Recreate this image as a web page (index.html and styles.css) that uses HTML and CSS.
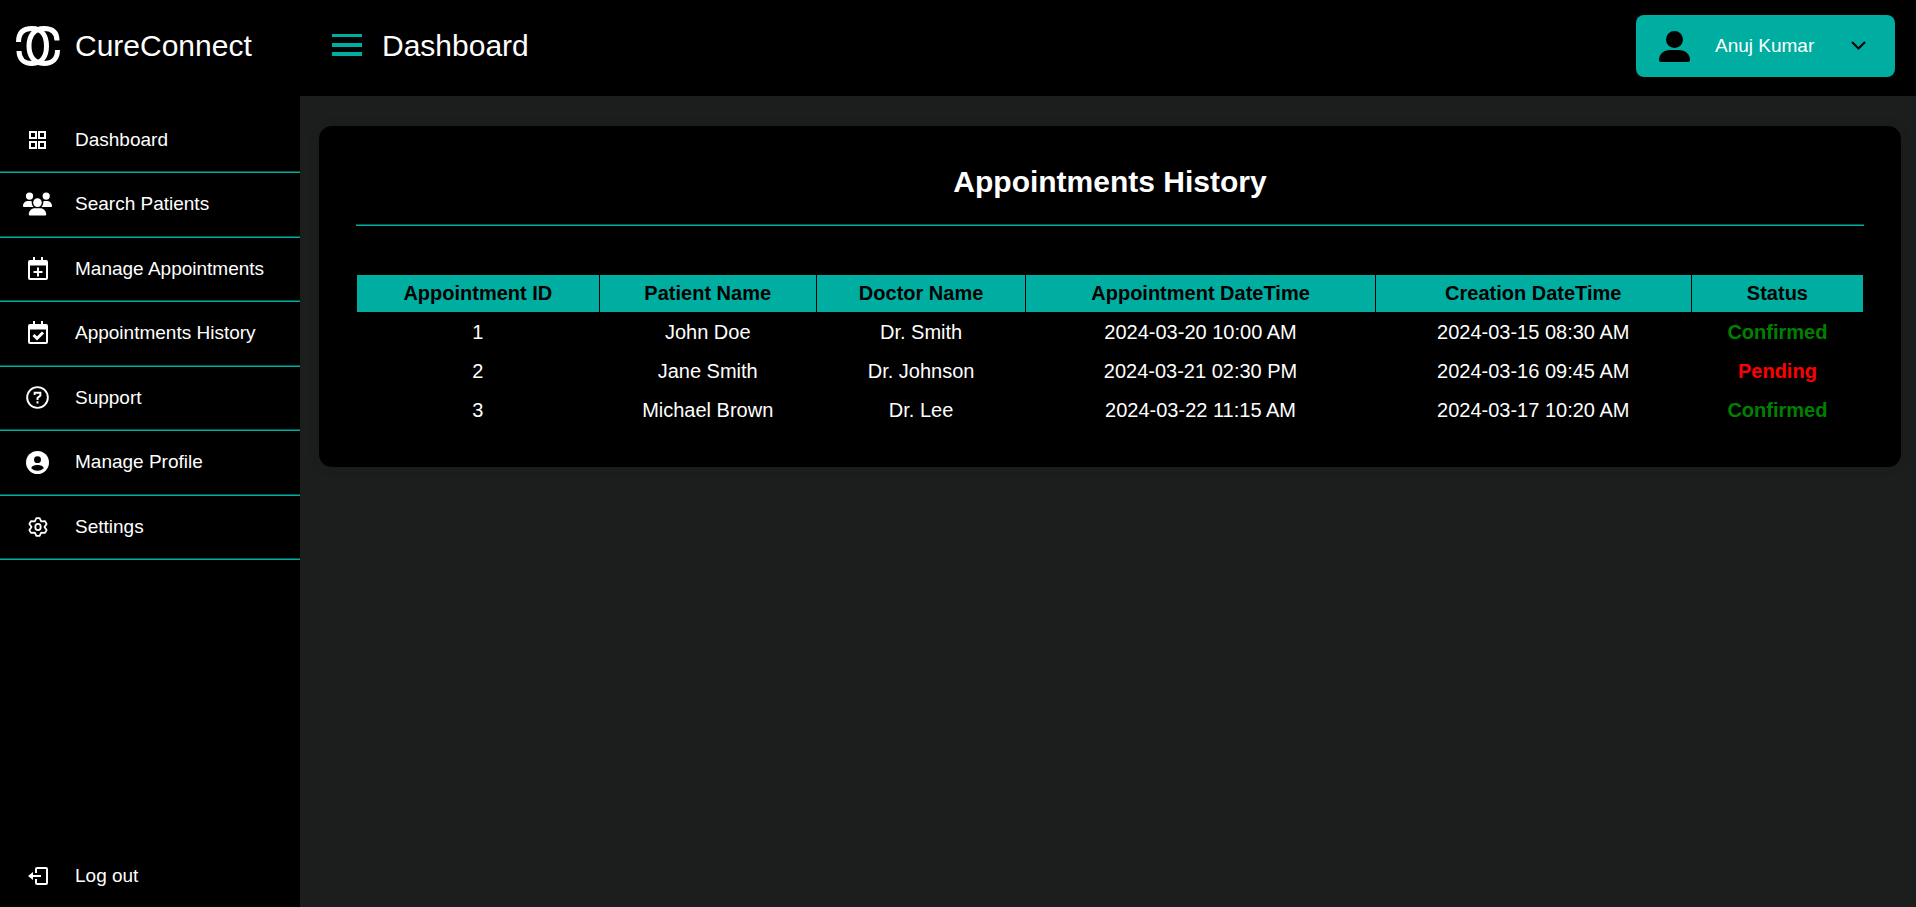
FILE: index.html
```html
<!DOCTYPE html>
<html lang="en">
<head>
<meta charset="utf-8">
<title>CureConnect</title>
<link rel="stylesheet" href="styles.css">
</head>
<body>
<div class="app">
  <aside class="sidebar">
    <div class="brand">
      <svg class="brand-logo" viewBox="0 0 44 40" aria-hidden="true">
        <g fill="none" stroke="#fff" stroke-width="5">
          <path d="M2.500 16C2.500 6 8 2.500 16 2.500C26 2.500 30.500 10 30.500 20S26 37.500 16 37.500C8 37.500 3 33 3 25"/>
          <path d="M41 14.500C41 6 36 2.500 28 2.500C18 2.500 13 10 13 20S18 37.500 28 37.500C36 37.500 41.500 33 41.500 24"/>
        </g>
      </svg>
      <span>CureConnect</span>
    </div>
    <nav class="menu">
      <a class="item" href="#"><span class="icon"><svg width="17" height="18" viewBox="0 0 17 18" fill="none" stroke="#fff" stroke-width="2"><path d="M1 1h6v6H1zM10 1h6v6h-6zM1 11h6v6H1zM10 11h6v6h-6z"/></svg></span>Dashboard</a>
      <a class="item" href="#"><span class="icon"><svg width="29" height="24" viewBox="0 0 640 512" fill="#fff"><path d="M144 0a80 80 0 1 1 0 160A80 80 0 1 1 144 0zM512 0a80 80 0 1 1 0 160A80 80 0 1 1 512 0zM0 298.700C0 239.800 47.800 192 106.700 192h42.700c15.900 0 31 3.500 44.600 9.700c-1.300 7.200-1.900 14.700-1.900 22.300c0 38.200 16.800 72.500 43.300 96H21.300C9.600 320 0 310.400 0 298.700zM405.300 320h-.7c26.600-23.500 43.300-57.800 43.300-96c0-7.600-.7-15-1.900-22.300c13.600-6.300 28.700-9.700 44.600-9.700h42.700C592.200 192 640 239.800 640 298.700c0 11.800-9.600 21.300-21.300 21.300H405.300zM224 224a96 96 0 1 1 192 0a96 96 0 1 1-192 0zM128 485.300C128 411.700 187.700 352 261.300 352h117.400C452.300 352 512 411.700 512 485.300c0 14.700-11.900 26.700-26.700 26.700H154.700c-14.700 0-26.700-11.900-26.700-26.700z"/></svg></span>Search Patients</a>
      <a class="item" href="#"><span class="icon"><svg width="20" height="24" viewBox="0 0 20 24" fill="none" stroke="#fff" stroke-width="2"><path d="M6 0v5M14 0v5M10 10.500v9M5.500 15h9"/><rect x="1" y="4" width="18" height="18" rx="1"/><path d="M1 6h18" stroke-width="5"/></svg></span>Manage Appointments</a>
      <a class="item" href="#"><span class="icon"><svg width="20" height="24" viewBox="0 0 20 24" fill="none" stroke="#fff" stroke-width="2"><path d="M6 0v5M14 0v5"/><path d="M5.500 14l3.500 3.500l6-6" stroke-width="3"/><rect x="1" y="4" width="18" height="18" rx="1"/><path d="M1 6h18" stroke-width="5"/></svg></span>Appointments History</a>
      <a class="item" href="#"><span class="icon"><svg width="23" height="23" viewBox="0 0 24 24" fill="none" stroke="#fff" stroke-width="2"><circle cx="12" cy="12" r="10.800"/><path d="M9 9.500V7h6v3l-3 2.500V14.500M12 15.800v2.400"/></svg></span>Support</a>
      <a class="item" href="#"><span class="icon"><svg width="23" height="23" viewBox="0 0 24 24"><circle cx="12" cy="12" r="12" fill="#fff"/><circle cx="12" cy="9" r="3.600"/><path d="M5.500 18C6 13.500 18 13.500 18.500 18C15 21.500 9 21.500 5.500 18z"/></svg></span>Manage Profile</a>
      <a class="item" href="#"><span class="icon"><svg width="20" height="20" viewBox="0 0 20 20" fill="none" stroke="#fff" stroke-width="1.800" stroke-linejoin="round"><path d="M8.400 1.200h3.200l1.600 3.200l3.800-.3l1.600 2.800L16.500 10l2.100 3.100l-1.600 2.800l-3.800-.3l-1.600 3.200H8.400l-1.600-3.200l-3.800 .3l-1.600-2.800L3.500 10L1.400 6.900L3 4.100l3.800 .3z"/><ellipse cx="10" cy="10" rx="2.700" ry="3.200"/></svg></span>Settings</a>
    </nav>
    <a class="item logout" href="#"><span class="icon"><svg width="20" height="18" viewBox="0 0 20 18" fill="none" stroke="#fff" stroke-width="2"><path d="M8 6V2q0-1 1-1h9q1 0 1 1v14q0 1-1 1H9q-1 0-1-1v-4M3 9h10"/><path d="M5 5v8L0 9z" fill="#fff" stroke="none"/></svg></span>Log out</a>
  </aside>
  <div class="content">
    <header class="topbar">
      <button class="toggle" type="button" aria-label="Toggle menu"><svg width="30" height="22" viewBox="0 0 30 22" fill="#00ada1"><path d="M0 0h30v3H0zM0 9h30v4H0zM0 18h30v4H0z"/></svg></button>
      <span class="page-name">Dashboard</span>
      <button class="account" type="button">
        <svg width="31" height="31" viewBox="0 0 31 31"><circle cx="15.500" cy="8.500" r="8.500"/><path d="M0 29C0 23 5 19 11 19h9c6 0 11 4 11 10q0 2-2 2H2q-2 0-2-2z"/></svg>
        <span class="account-name">Anuj Kumar</span>
        <svg width="15" height="10" viewBox="0 0 15 10" fill="none" stroke="#000" stroke-width="2"><path d="M1 1l6.500 6.500L14 1"/></svg>
      </button>
    </header>
    <main class="main">
      <section class="card">
        <h1 class="title">Appointments History</h1>
        <table class="history">
          <colgroup><col class="col-id"><col class="col-patient"><col class="col-doctor"><col class="col-appointment"><col class="col-creation"><col></colgroup>
          <thead><tr><th>Appointment ID</th><th>Patient Name</th><th>Doctor Name</th><th>Appointment DateTime</th><th>Creation DateTime</th><th>Status</th></tr></thead>
          <tbody>
            <tr><td>1</td><td>John Doe</td><td>Dr. Smith</td><td>2024-03-20 10:00 AM</td><td>2024-03-15 08:30 AM</td><td class="confirmed">Confirmed</td></tr>
            <tr><td>2</td><td>Jane Smith</td><td>Dr. Johnson</td><td>2024-03-21 02:30 PM</td><td>2024-03-16 09:45 AM</td><td class="pending">Pending</td></tr>
            <tr><td>3</td><td>Michael Brown</td><td>Dr. Lee</td><td>2024-03-22 11:15 AM</td><td>2024-03-17 10:20 AM</td><td class="confirmed">Confirmed</td></tr>
          </tbody>
        </table>
      </section>
    </main>
  </div>
</div>
</body>
</html>
```
FILE: styles.css
```css
* { box-sizing: border-box; }
body {
  margin: 0;
  background: #1c1e1d;
  color: #fff;
  font-family: "Liberation Sans", Arial, sans-serif;
  font-size: 19px;
}
button { font: inherit; color: inherit; border: 0; cursor: pointer; }
.app { display: flex; min-height: 100vh; }
.sidebar {
  flex: none;
  width: 300px;
  background: #000;
  display: flex;
  flex-direction: column;
}
.brand {
  height: 109px;
  padding: 26px 0 0 16px;
  display: flex;
  align-items: flex-start;
  gap: 15px;
  font-size: 30px;
  line-height: 40px;
}
.brand-logo { width: 44px; height: 40px; }
.item {
  height: 64px;
  display: flex;
  align-items: center;
  color: #fff;
  text-decoration: none;
}
.icon {
  width: 75px;
  display: flex;
  justify-content: center;
}
.menu .item {
  padding-bottom: 2px;
  border-bottom: 1px solid #00ada1;
  box-shadow: inset 0 -1px #005a54;
}
.menu .item:nth-child(even) { height: 65px; }
.logout { height: 62px; margin-top: auto; }
.content { flex: 1; min-width: 0; }
.topbar {
  height: 96px;
  padding: 0 21px 4px 32px;
  background: #000;
  display: flex;
  align-items: center;
}
.toggle { padding: 0 0 2px; background: none; display: flex; }
.page-name { margin-left: 20px; font-size: 30px; }
.account {
  margin-left: auto;
  width: 259px;
  height: 62px;
  padding: 0 29px 0 23px;
  border-radius: 8px;
  background: #00ada1;
  display: flex;
  align-items: center;
}
.account-name { margin: 0 auto 0 25px; }
.main { padding: 30px 15px 30px 19px; }
.card {
  padding: 38px 37px 37px;
  background: #000;
  border-radius: 13px;
  box-shadow: 0 0 12px rgba(0, 0, 0, .1);
}
.title {
  margin: 0 0 48px;
  padding-bottom: 25px;
  border-bottom: 1px solid #00ada1;
  box-shadow: inset 0 -1px #005a54;
  font-size: 30px;
  line-height: 36px;
  text-align: center;
}
.history {
  width: 100%;
  border-spacing: 1px;
  font-size: 20px;
  text-align: center;
}
.history th, .history td { padding: 7px; }
.history th { background: #00ada1; color: #000; line-height: 23px; }
.history td { line-height: 24px; }
.col-id { width: 16.1%; }
.col-patient { width: 14.4%; }
.col-doctor { width: 13.9%; }
.col-appointment { width: 23.2%; }
.col-creation { width: 21%; }
.history .confirmed { color: green; font-weight: bold; }
.history .pending { color: red; font-weight: bold; }
```
